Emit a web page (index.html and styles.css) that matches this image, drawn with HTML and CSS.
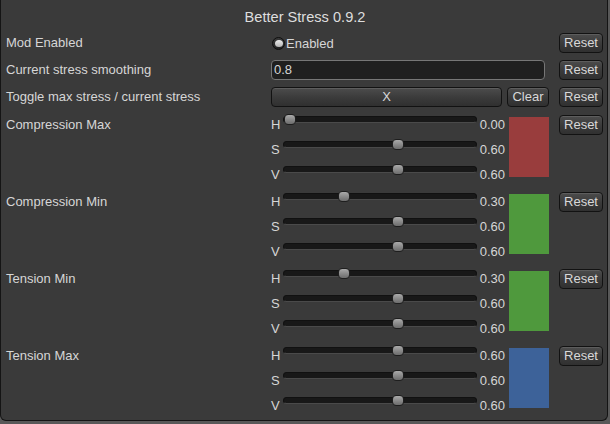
FILE: index.html
```html
<!DOCTYPE html>
<html>
<head>
<meta charset="utf-8">
<link rel="stylesheet" href="styles.css">
</head>
<body>
<div class="window">
  <div class="title">Better Stress 0.9.2</div>

  <div class="row">
    <div class="label">Mod Enabled</div>
    <div class="ctrl toggle"><span class="radio"></span><span>Enabled</span></div>
    <button class="btn">Reset</button>
  </div>

  <div class="row">
    <div class="label">Current stress smoothing</div>
    <div class="ctrl"><div class="field">0.8</div></div>
    <button class="btn">Reset</button>
  </div>

  <div class="row">
    <div class="label">Toggle max stress / current stress</div>
    <div class="ctrl keybind"><button class="btn wide">X</button><button class="btn clear">Clear</button></div>
    <button class="btn">Reset</button>
  </div>

  <div class="group">
    <div class="label">Compression Max</div>
    <div class="hsv">
      <div class="sliders">
        <div class="srow"><span class="ch">H</span><div class="slider"><div class="track"></div><div class="thumb" style="--v:0"></div></div><span class="val">0.00</span></div>
        <div class="srow"><span class="ch">S</span><div class="slider"><div class="track"></div><div class="thumb" style="--v:0.6"></div></div><span class="val">0.60</span></div>
        <div class="srow"><span class="ch">V</span><div class="slider"><div class="track"></div><div class="thumb" style="--v:0.6"></div></div><span class="val">0.60</span></div>
      </div>
      <div class="swatch red"></div>
    </div>
    <button class="btn">Reset</button>
  </div>

  <div class="group">
    <div class="label">Compression Min</div>
    <div class="hsv">
      <div class="sliders">
        <div class="srow"><span class="ch">H</span><div class="slider"><div class="track"></div><div class="thumb" style="--v:0.3"></div></div><span class="val">0.30</span></div>
        <div class="srow"><span class="ch">S</span><div class="slider"><div class="track"></div><div class="thumb" style="--v:0.6"></div></div><span class="val">0.60</span></div>
        <div class="srow"><span class="ch">V</span><div class="slider"><div class="track"></div><div class="thumb" style="--v:0.6"></div></div><span class="val">0.60</span></div>
      </div>
      <div class="swatch green"></div>
    </div>
    <button class="btn">Reset</button>
  </div>

  <div class="group">
    <div class="label">Tension Min</div>
    <div class="hsv">
      <div class="sliders">
        <div class="srow"><span class="ch">H</span><div class="slider"><div class="track"></div><div class="thumb" style="--v:0.3"></div></div><span class="val">0.30</span></div>
        <div class="srow"><span class="ch">S</span><div class="slider"><div class="track"></div><div class="thumb" style="--v:0.6"></div></div><span class="val">0.60</span></div>
        <div class="srow"><span class="ch">V</span><div class="slider"><div class="track"></div><div class="thumb" style="--v:0.6"></div></div><span class="val">0.60</span></div>
      </div>
      <div class="swatch green"></div>
    </div>
    <button class="btn">Reset</button>
  </div>

  <div class="group">
    <div class="label">Tension Max</div>
    <div class="hsv">
      <div class="sliders">
        <div class="srow"><span class="ch">H</span><div class="slider"><div class="track"></div><div class="thumb" style="--v:0.6"></div></div><span class="val">0.60</span></div>
        <div class="srow"><span class="ch">S</span><div class="slider"><div class="track"></div><div class="thumb" style="--v:0.6"></div></div><span class="val">0.60</span></div>
        <div class="srow"><span class="ch">V</span><div class="slider"><div class="track"></div><div class="thumb" style="--v:0.6"></div></div><span class="val">0.60</span></div>
      </div>
      <div class="swatch blue"></div>
    </div>
    <button class="btn">Reset</button>
  </div>
</div>
</body>
</html>
```

FILE: styles.css
```css
html, body {
  margin: 0;
  padding: 0;
}
body {
  background: #585858;
  width: 610px;
  height: 424px;
  overflow: hidden;
  font-family: "Liberation Sans", Arial, sans-serif;
  font-size: 13px;
  color: #d6d6d6;
}
.window {
  box-sizing: border-box;
  width: 608px;
  height: 421px;
  background: #3a3a3a;
  border: 1px solid #141414;
  border-top: 0;
  border-radius: 0 0 6px 6px;
  padding: 0 3px 0 5px;
  display: flex;
  flex-direction: column;
}
.title {
  height: 33px;
  line-height: 34px;
  text-align: center;
  font-size: 14.6px;
  color: #dedede;
}
.row, .group {
  display: grid;
  grid-template-columns: 265px 278px 54px;
  align-items: start;
}
.row > .btn, .group > .btn {
  margin-left: 10px;
  width: 44px;
}
.row {
  height: 20px;
  margin-bottom: 7px;
}
.row:nth-of-type(4) {
  margin-bottom: 5px;
}
.group {
  height: 75px;
  margin-bottom: 2px;
}
.label {
  line-height: 20px;
  white-space: nowrap;
}
.group .label {
  line-height: 25px;
}
.ctrl {
  height: 20px;
  display: flex;
  align-items: center;
}
.toggle {
  padding-left: 1px;
  gap: 1px;
}
.radio {
  box-sizing: border-box;
  width: 13px;
  height: 13px;
  border-radius: 50%;
  background: linear-gradient(#3a3a3a, #222);
  border: 1px solid #0e0e0e;
  display: flex;
  align-items: center;
  justify-content: center;
}
.radio::after {
  content: "";
  width: 8px;
  height: 7px;
  border-radius: 50%;
  background: linear-gradient(#ececec, #b4b4b4);
}
.field {
  box-sizing: border-box;
  width: 274px;
  height: 20px;
  line-height: 18px;
  padding-left: 2px;
  background: #1f1f1f;
  border: 1px solid #767676;
  border-radius: 4px;
}
.keybind {
  gap: 5px;
}
.btn {
  box-sizing: border-box;
  height: 20px;
  margin: 0;
  padding: 0;
  font: inherit;
  color: #d8d8d8;
  background: linear-gradient(#4c4c4c, #3a3a3a 55%, #303030);
  border: 1px solid #121212;
  border-radius: 4px;
  box-shadow: inset 0 1px 0 rgba(255,255,255,0.1);
  text-align: center;
  line-height: 18px;
}
.wide {
  width: 231px;
}
.clear {
  width: 42px;
}
.group > .btn {
  margin-top: 3px;
}
.hsv {
  display: flex;
  gap: 4px;
}
.sliders {
  display: flex;
  flex-direction: column;
}
.srow {
  display: grid;
  grid-template-columns: 12px 194px 28px;
  height: 25px;
  line-height: 25px;
}
.val {
  text-align: right;
}
.slider {
  position: relative;
  height: 25px;
}
.track {
  box-sizing: border-box;
  margin-top: 4px;
  height: 7px;
  border-radius: 3.5px;
  background: #181818;
  border: 1px solid #111;
  border-bottom-color: #4a4a4a;
}
.thumb {
  position: absolute;
  top: 2px;
  left: calc(1px + var(--v) * (100% - 14px));
  box-sizing: border-box;
  width: 12px;
  height: 11px;
  border-radius: 4px;
  border: 1px solid #1e1e1e;
  background: linear-gradient(#aaaaaa, #8a8a8a 50%, #6c6c6c);
}
.swatch {
  width: 40px;
  height: 60px;
  margin-top: 5px;
}
.red { background: #993d3d; }
.green { background: #4f993d; }
.blue { background: #3d6299; }
```
